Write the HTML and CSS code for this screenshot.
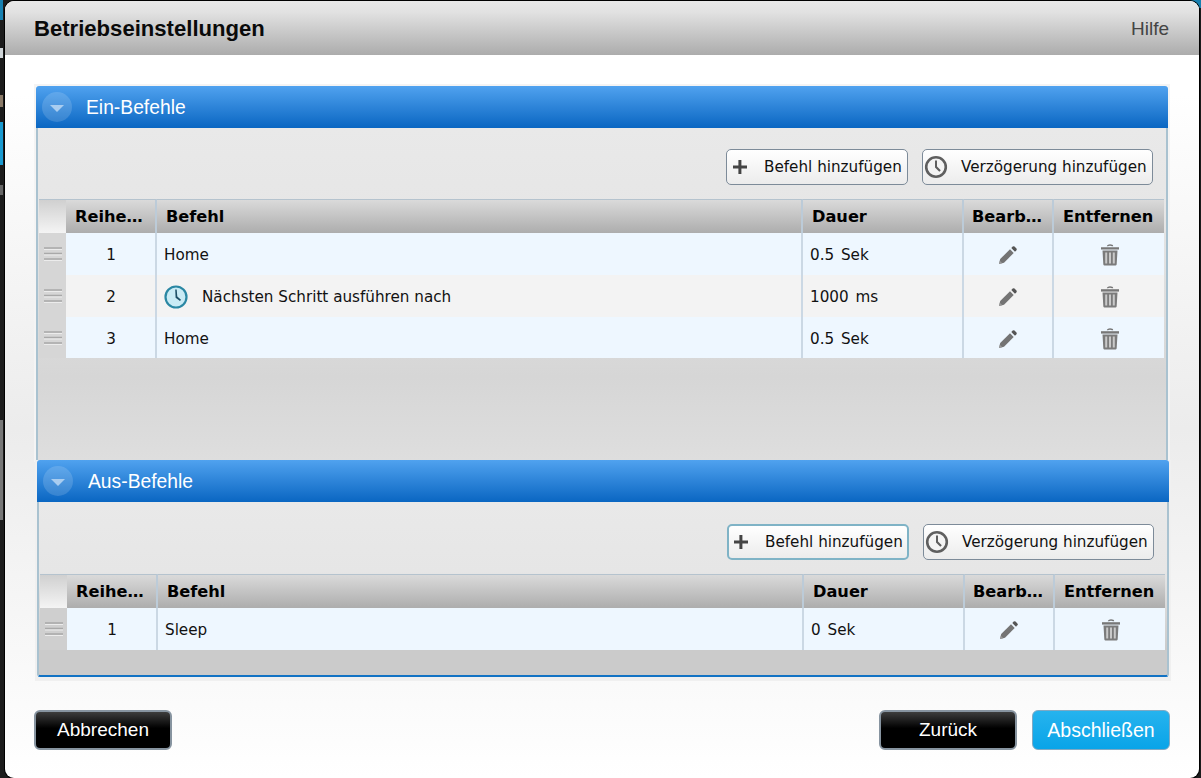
FILE: index.html
```html
<!DOCTYPE html>
<html lang="de">
<head>
<meta charset="utf-8">
<title>Betriebseinstellungen</title>
<link rel="stylesheet" href="styles.css">
</head>
<body>
<svg class="defs" width="0" height="0" aria-hidden="true">
  <symbol id="i-plus" viewBox="0 0 16 16"><path d="M6.400 1h3v5.500H15v3H9.400v5.500h-3V9.500H1v-3h5.400z" fill="#444"/></symbol>
  <symbol id="i-clock" viewBox="0 0 24 24"><circle cx="12" cy="12" r="9.800" fill="#f4f4f4" stroke="#5f5f5f" stroke-width="2.600"/><path d="M11 5.500h2v6l3.800 3.800-1.500 1.500-4.300-4.400z" fill="#5f5f5f"/></symbol>
  <symbol id="i-bclock" viewBox="0 0 24 24"><circle cx="12" cy="12" r="10.500" fill="#c9ebf5" stroke="#2a87a3" stroke-width="2.200"/><path d="M11.200 4.500h1.500l.6 7 3.700 3.200-1 1.200-4.400-3.200z" fill="#1d4f66"/></symbol>
  <symbol id="i-pen" viewBox="0 0 20 20"><path d="M1 19l1.200-5L12 4.300l3.700 3.700L6 17.800z" fill="#747474"/><path d="M1 19l.8-3.300 2.500 2.500z" fill="#9a9a9a"/><path d="M13.300 3l1.400-1.400a1.300 1.300 0 0 1 1.800 0l1.900 1.900a1.300 1.300 0 0 1 0 1.800L17 6.700z" fill="#555"/></symbol>
  <symbol id="i-trash" viewBox="0 0 20 22"><path d="M7.500 2.200c0-1.600 5-1.600 5 0" fill="none" stroke="#777" stroke-width="1.400"/><path d="M1 3.200h18v2.400H1z" fill="#777"/><path d="M2.500 6.500h15l-.8 13.500c0 1-.8 1.600-1.700 1.600H5c-.9 0-1.700-.6-1.700-1.600z" fill="#7b7b7b"/><path d="M5.200 8.500h2v11h-2zM9 8.500h2v11H9zM12.800 8.500h2v11h-2z" fill="#c9c9c9"/></symbol>
  <symbol id="i-drag" viewBox="0 0 18 14"><path d="M0 1h18M0 6.500h18M0 12h18" stroke="#a9a9a9" stroke-width="1.500"/><path d="M0 2.500h18M0 8h18M0 13.500h18" stroke="#ececec" stroke-width="1"/></symbol>
</svg>
<div class="dialog">
  <header class="dialog-head">
    <h1 class="dialog-title">Betriebseinstellungen</h1>
    <span class="help">Hilfe</span>
  </header>
  <main class="dialog-body">
    <section class="panel panel-on">
      <div class="panel-head">
        <span class="toggle"><span class="toggle-arrow"></span></span>
        <h2 class="panel-title">Ein-Befehle</h2>
      </div>
      <div class="panel-content content-on">
        <div class="toolbar">
          <button class="tool tool-add"><svg class="ico-plus"><use href="#i-plus"/></svg><span>Befehl hinzufügen</span></button>
          <button class="tool tool-delay"><svg class="ico-clock"><use href="#i-clock"/></svg><span>Verzögerung hinzufügen</span></button>
        </div>
        <table class="grid">
          <colgroup><col class="c-drag"><col class="c-order"><col class="c-cmd"><col class="c-dur"><col class="c-edit"><col class="c-del"></colgroup>
          <thead><tr><th class="th-drag"></th><th>Reihenfolge</th><th>Befehl</th><th>Dauer</th><th>Bearbeiten</th><th>Entfernen</th></tr></thead>
          <tbody>
            <tr class="row-odd"><td class="drag"><svg class="ico-drag"><use href="#i-drag"/></svg></td><td class="num">1</td><td>Home</td><td>0.5 Sek</td><td class="act"><svg class="ico-pen"><use href="#i-pen"/></svg></td><td class="act"><svg class="ico-trash"><use href="#i-trash"/></svg></td></tr>
            <tr class="row-even"><td class="drag"><svg class="ico-drag"><use href="#i-drag"/></svg></td><td class="num">2</td><td><span class="delay"><svg class="ico-bclock"><use href="#i-bclock"/></svg>Nächsten Schritt ausführen nach</span></td><td>1000 ms</td><td class="act"><svg class="ico-pen"><use href="#i-pen"/></svg></td><td class="act"><svg class="ico-trash"><use href="#i-trash"/></svg></td></tr>
            <tr class="row-odd row-short"><td class="drag"><svg class="ico-drag"><use href="#i-drag"/></svg></td><td class="num">3</td><td>Home</td><td>0.5 Sek</td><td class="act"><svg class="ico-pen"><use href="#i-pen"/></svg></td><td class="act"><svg class="ico-trash"><use href="#i-trash"/></svg></td></tr>
          </tbody>
        </table>
      </div>
    </section>
    <section class="panel panel-off">
      <div class="panel-head">
        <span class="toggle"><span class="toggle-arrow"></span></span>
        <h2 class="panel-title">Aus-Befehle</h2>
      </div>
      <div class="panel-content content-off">
        <div class="toolbar">
          <button class="tool tool-add tool-focus"><svg class="ico-plus"><use href="#i-plus"/></svg><span>Befehl hinzufügen</span></button>
          <button class="tool tool-delay"><svg class="ico-clock"><use href="#i-clock"/></svg><span>Verzögerung hinzufügen</span></button>
        </div>
        <table class="grid">
          <colgroup><col class="c-drag"><col class="c-order"><col class="c-cmd"><col class="c-dur"><col class="c-edit"><col class="c-del"></colgroup>
          <thead><tr><th class="th-drag"></th><th>Reihenfolge</th><th>Befehl</th><th>Dauer</th><th>Bearbeiten</th><th>Entfernen</th></tr></thead>
          <tbody>
            <tr class="row-odd"><td class="drag"><svg class="ico-drag"><use href="#i-drag"/></svg></td><td class="num">1</td><td>Sleep</td><td>0 Sek</td><td class="act"><svg class="ico-pen"><use href="#i-pen"/></svg></td><td class="act"><svg class="ico-trash"><use href="#i-trash"/></svg></td></tr>
          </tbody>
        </table>
      </div>
    </section>
  </main>
  <footer class="dialog-foot">
    <button class="btn btn-dark btn-cancel">Abbrechen</button>
    <button class="btn btn-dark">Zurück</button>
    <button class="btn btn-blue">Abschließen</button>
  </footer>
</div>
</body>
</html>
```
FILE: styles.css
```css
* { box-sizing: border-box; }
html, body { margin: 0; height: 778px; overflow: hidden; }
body {
  background:
    linear-gradient(#1a9ad0, #1a9ad0) 0 122px / 3px 43px no-repeat,
    linear-gradient(#8a7a68, #8a7a68) 0 95px / 3px 12px no-repeat,
    linear-gradient(#cfd5d8, #cfd5d8) 0 48px / 3px 10px no-repeat,
    linear-gradient(#777, #777) 0 420px / 3px 100px no-repeat,
    linear-gradient(#666, #666) 0 185px / 3px 10px no-repeat,
    linear-gradient(#1780b0, #1780b0) 0 0 / 3px 20px no-repeat,
    linear-gradient(#1780b0, #1780b0) 1190px 0 / 11px 8px no-repeat,
    #1c1c1c;
  font-family: "DejaVu Sans", Verdana, sans-serif;
}
.defs { position: absolute; }
.dialog {
  width: 1194px;
  height: 777px;
  margin: 1px 0 0 5px;
  display: flex;
  flex-direction: column;
  border-radius: 9px;
  overflow: hidden;
  background: linear-gradient(#fff 0, #fff 12%, #ececec 55%, #fff 100%);
  box-shadow: 0 0 0 1px #000;
}
.dialog-head {
  height: 54px;
  flex: none;
  display: flex;
  align-items: center;
  justify-content: space-between;
  padding: 2px 30px 0 29px;
  background: linear-gradient(#e8e8e8, #e2e2e2 20%, #acacac);
  font-family: "Liberation Sans", Arial, sans-serif;
}
.dialog-title { margin: 0; font-size: 22.100px; font-weight: 700; color: #0a0a0a; }
.help { font-size: 19px; color: #444; }
.dialog-body { flex: 1; padding: 31px 0 0 31px; }
.panel { width: 1132px; }
.panel-on { box-shadow: 0 0 0 2px #f4f4f4; }
.panel-off { margin-left: 1px; box-shadow: 0 2px 0 2px #f0f0f0; }
.panel-head {
  height: 42px;
  display: flex;
  align-items: center;
  padding-left: 6px;
  border-radius: 3px 3px 0 0;
  background: linear-gradient(#50a2ef, #0a66c2);
  font-family: "Liberation Sans", Arial, sans-serif;
}
.toggle {
  width: 30px;
  height: 30px;
  flex: none;
  display: flex;
  align-items: center;
  justify-content: center;
  border-radius: 50%;
  background: rgba(255, 255, 255, .15);
}
.toggle-arrow {
  width: 0;
  height: 0;
  margin-top: 3px;
  border: 7px solid transparent;
  border-top: 7px solid #a9cdf0;
  border-bottom: 0;
}
.panel-title { margin: 1px 0 0 15px; font-size: 19.300px; font-weight: 400; color: #fff; }
.panel-on .panel-title { margin-left: 14px; }
.panel-content {
  border-left: 2px solid #a9c2d0;
  border-right: 2px solid #a9c2d0;
  padding: 0 2px 0 1px;
}
.content-on {
  height: 332px;
  background: linear-gradient(#e9e9e9, #e6e6e6 25%, #d6d6d6 75%, #dedede);
}
.content-off {
  height: 175px;
  border-bottom: 2px solid #1273c4;
  border-radius: 0 0 3px 3px;
  background: linear-gradient(#e9e9e9, #e6e6e6 40%, #cbcbcb 85%);
}
.toolbar {
  height: 72px;
  display: flex;
  justify-content: flex-end;
  align-items: flex-start;
  gap: 14px;
  padding: 22px 11px 0 0;
}
.content-on .toolbar { height: 71px; padding-top: 21px; }
.tool {
  height: 36px;
  display: flex;
  align-items: center;
  padding: 0;
  font-family: "DejaVu Sans", Verdana, sans-serif;
  font-size: 15.200px;
  color: #111;
  white-space: nowrap;
  border: 1px solid #7d8b99;
  border-radius: 5px;
  background: linear-gradient(#fff, #ececec);
}
.tool-add { width: 182px; }
.tool-delay { width: 231px; }
.tool-focus { border: 2px solid #7fb3c6; }
.ico-plus { width: 16px; height: 16px; margin: 0 16px 0 5px; flex: none; }
.tool-focus .ico-plus { margin: 0 16px 0 4px; }
.ico-clock { width: 24px; height: 24px; margin: 0 13px 0 1px; flex: none; }
.grid {
  width: 1125px;
  table-layout: fixed;
  border-collapse: separate;
  border-spacing: 0;
  font-size: 15.200px;
  color: #111;
}
.c-drag { width: 27px; }
.c-order { width: 91px; }
.c-cmd { width: 646px; }
.c-dur { width: 161px; }
.c-edit { width: 90px; }
.c-del { width: 110px; }
.grid th {
  height: 34px;
  padding: 0 8px 0 9px;
  text-align: left;
  font-size: 16.200px;
  font-weight: 700;
  color: #000;
  white-space: nowrap;
  overflow: hidden;
  text-overflow: ellipsis;
  background: linear-gradient(#dadada, #adadad);
  border-top: 1px solid #b5c3ce;
  border-right: 2px solid #bccbd8;
}
.grid th:nth-child(5) { padding: 0 6px 0 8px; }
.grid th:last-child { border-right: 0; padding: 0 0 0 9px; }
.grid .th-drag { background: linear-gradient(#d0d0d0, #f4f4f4); border-right: 0; }
.grid td {
  height: 42px;
  padding: 2px 8px 0;
  white-space: nowrap;
  overflow: hidden;
  border-right: 2px solid #cbd8e4;
}
.grid td:last-child { border-right: 0; }
.grid td:nth-child(3) { padding-left: 7px; }
.grid td:nth-child(4) { padding-left: 7px; word-spacing: 2px; }
.row-short td { height: 41px; }
.row-odd { background: #eef7ff; }
.row-even { background: #f3f3f3; }
.grid .drag { background: #d6d6d6; border-right: 0; padding: 0 0 0 5px; }
.content-off .grid .drag { background: #cfcfcf; }
.grid .num { text-align: center; padding-left: 9px; }
.grid .act { padding: 0; }
.grid td:last-child.act { padding-left: 2px; }
.delay { display: flex; align-items: center; }
.ico-drag { width: 18px; height: 14px; display: block; }
.ico-pen { width: 20px; height: 20px; display: block; margin: 2px auto 0; }
.ico-trash { width: 20px; height: 22px; display: block; margin: 2px auto 0; }
.ico-bclock { width: 24px; height: 24px; margin-right: 14px; flex: none; }
.dialog-foot {
  flex: none;
  display: flex;
  gap: 15px;
  padding: 0 29px 28px;
}
.btn {
  width: 138px;
  height: 40px;
  padding: 0;
  font-family: "Liberation Sans", Arial, sans-serif;
  font-size: 19px;
  color: #fff;
  border-radius: 6px;
}
.btn-dark { background: linear-gradient(#3d3d3d, #000 45%); border: 2px solid #8794a0; }
.btn-blue { background: linear-gradient(#26b3ee, #09a4e8); border: 1px solid #7fa9c4; font-size: 19.500px; }
.btn-cancel { margin-right: auto; }
```
